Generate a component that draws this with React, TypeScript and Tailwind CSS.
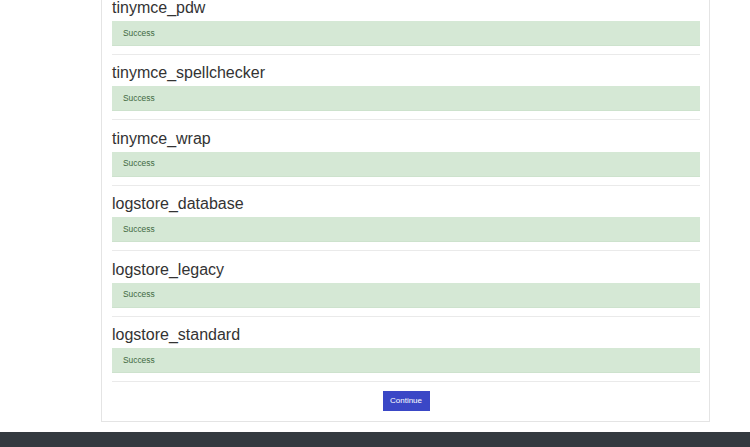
const plugins = [
  'tinymce_pdw',
  'tinymce_spellchecker',
  'tinymce_wrap',
  'logstore_database',
  'logstore_legacy',
  'logstore_standard',
];

function PluginResult({ name }: { name: string }) {
  return (
    <div>
      <h3 className="mt-[9.4px] mb-[4px] text-[16px] leading-[18px] font-normal text-[#333]">{name}</h3>
      <div className="h-[25px] mb-[8px] flex items-center px-[11px] bg-[#d5e8d5] border-b border-[#cde2cd] text-[8.4px] text-[#3f683f]">
        Success
      </div>
      <hr className="border-0 border-t border-[#eaeaea]" />
    </div>
  );
}

export default function App() {
  return (
    <div className="w-[750px] h-[447px] overflow-hidden bg-white flex flex-col" style={{ fontFamily: '"Liberation Sans", Arial, sans-serif' }}>
      <div className="ml-[101px] w-[609px] -mt-[10.4px] border border-t-0 border-[#e4e4e4] pl-[10px] pr-[9px] pb-[10px]">
        {plugins.map((p) => (
          <PluginResult key={p} name={p} />
        ))}
        <div className="flex justify-center pt-[9px]">
          <button className="h-[20px] w-[47px] bg-[#3a47c6] text-white text-[8px] leading-none">Continue</button>
        </div>
      </div>
      <div className="mt-[10px] flex-1 bg-[#343a40]" />
    </div>
  );
}
